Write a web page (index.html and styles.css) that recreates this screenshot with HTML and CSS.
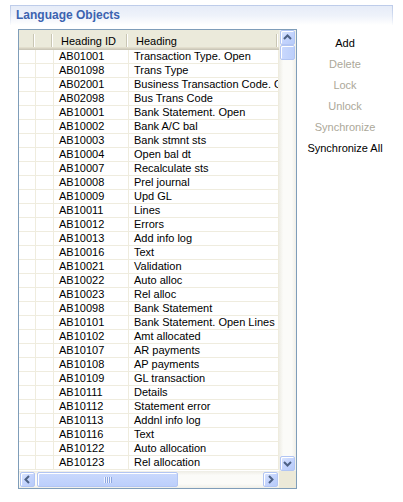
FILE: index.html
```html
<!DOCTYPE html>
<html>
<head>
<meta charset="utf-8">
<link rel="stylesheet" href="styles.css">
</head>
<body>
<div class="page">
  <div class="section-title">Language Objects</div>
  <div class="content">
    <div class="table-box">
      <div class="table-main">
        <div class="grid">
          <div class="row head">
            <div class="cell hc"></div>
            <div class="cell hc"></div>
            <div class="cell hc htext">Heading ID</div>
            <div class="cell hc htext">Heading</div>
          </div>
          <div class="row"><div class="cell"></div><div class="cell"></div><div class="cell t">AB01001</div><div class="cell t">Transaction Type. Open</div></div>
          <div class="row"><div class="cell"></div><div class="cell"></div><div class="cell t">AB01098</div><div class="cell t">Trans Type</div></div>
          <div class="row"><div class="cell"></div><div class="cell"></div><div class="cell t">AB02001</div><div class="cell t">Business Transaction Code. Open</div></div>
          <div class="row"><div class="cell"></div><div class="cell"></div><div class="cell t">AB02098</div><div class="cell t">Bus Trans Code</div></div>
          <div class="row"><div class="cell"></div><div class="cell"></div><div class="cell t">AB10001</div><div class="cell t">Bank Statement. Open</div></div>
          <div class="row"><div class="cell"></div><div class="cell"></div><div class="cell t">AB10002</div><div class="cell t">Bank A/C bal</div></div>
          <div class="row"><div class="cell"></div><div class="cell"></div><div class="cell t">AB10003</div><div class="cell t">Bank stmnt sts</div></div>
          <div class="row"><div class="cell"></div><div class="cell"></div><div class="cell t">AB10004</div><div class="cell t">Open bal dt</div></div>
          <div class="row"><div class="cell"></div><div class="cell"></div><div class="cell t">AB10007</div><div class="cell t">Recalculate sts</div></div>
          <div class="row"><div class="cell"></div><div class="cell"></div><div class="cell t">AB10008</div><div class="cell t">Prel journal</div></div>
          <div class="row"><div class="cell"></div><div class="cell"></div><div class="cell t">AB10009</div><div class="cell t">Upd GL</div></div>
          <div class="row"><div class="cell"></div><div class="cell"></div><div class="cell t">AB10011</div><div class="cell t">Lines</div></div>
          <div class="row"><div class="cell"></div><div class="cell"></div><div class="cell t">AB10012</div><div class="cell t">Errors</div></div>
          <div class="row"><div class="cell"></div><div class="cell"></div><div class="cell t">AB10013</div><div class="cell t">Add info log</div></div>
          <div class="row"><div class="cell"></div><div class="cell"></div><div class="cell t">AB10016</div><div class="cell t">Text</div></div>
          <div class="row"><div class="cell"></div><div class="cell"></div><div class="cell t">AB10021</div><div class="cell t">Validation</div></div>
          <div class="row"><div class="cell"></div><div class="cell"></div><div class="cell t">AB10022</div><div class="cell t">Auto alloc</div></div>
          <div class="row"><div class="cell"></div><div class="cell"></div><div class="cell t">AB10023</div><div class="cell t">Rel alloc</div></div>
          <div class="row"><div class="cell"></div><div class="cell"></div><div class="cell t">AB10098</div><div class="cell t">Bank Statement</div></div>
          <div class="row"><div class="cell"></div><div class="cell"></div><div class="cell t">AB10101</div><div class="cell t">Bank Statement. Open Lines</div></div>
          <div class="row"><div class="cell"></div><div class="cell"></div><div class="cell t">AB10102</div><div class="cell t">Amt allocated</div></div>
          <div class="row"><div class="cell"></div><div class="cell"></div><div class="cell t">AB10107</div><div class="cell t">AR payments</div></div>
          <div class="row"><div class="cell"></div><div class="cell"></div><div class="cell t">AB10108</div><div class="cell t">AP payments</div></div>
          <div class="row"><div class="cell"></div><div class="cell"></div><div class="cell t">AB10109</div><div class="cell t">GL transaction</div></div>
          <div class="row"><div class="cell"></div><div class="cell"></div><div class="cell t">AB10111</div><div class="cell t">Details</div></div>
          <div class="row"><div class="cell"></div><div class="cell"></div><div class="cell t">AB10112</div><div class="cell t">Statement error</div></div>
          <div class="row"><div class="cell"></div><div class="cell"></div><div class="cell t">AB10113</div><div class="cell t">Addnl info log</div></div>
          <div class="row"><div class="cell"></div><div class="cell"></div><div class="cell t">AB10116</div><div class="cell t">Text</div></div>
          <div class="row"><div class="cell"></div><div class="cell"></div><div class="cell t">AB10122</div><div class="cell t">Auto allocation</div></div>
          <div class="row"><div class="cell"></div><div class="cell"></div><div class="cell t">AB10123</div><div class="cell t">Rel allocation</div></div>
        </div>
        <div class="vscroll">
          <div class="sbtn"><svg width="15" height="15" viewBox="0 0 15 15"><polyline points="4,9 7.5,5.5 11,9" fill="none" stroke="#4d6185" stroke-width="2"/></svg></div>
          <div class="vthumb"></div>
          <div class="vtrack"></div>
          <div class="sbtn"><svg width="15" height="15" viewBox="0 0 15 15"><polyline points="4,6 7.5,9.5 11,6" fill="none" stroke="#4d6185" stroke-width="2"/></svg></div>
        </div>
      </div>
      <div class="hscroll">
        <div class="hbtn-wrap"><div class="sbtn"><svg width="15" height="15" viewBox="0 0 15 15"><polyline points="9,4 5.5,7.5 9,11" fill="none" stroke="#4d6185" stroke-width="2"/></svg></div></div>
        <div class="htrack"><div class="hthumb"><span class="grip"></span></div></div>
        <div class="hbtn-wrap"><div class="sbtn"><svg width="15" height="15" viewBox="0 0 15 15"><polyline points="6,4 9.5,7.5 6,11" fill="none" stroke="#4d6185" stroke-width="2"/></svg></div></div>
        <div class="corner"></div>
      </div>
    </div>
    <div class="actions">
      <div class="act">Add</div>
      <div class="act off">Delete</div>
      <div class="act off">Lock</div>
      <div class="act off">Unlock</div>
      <div class="act off">Synchronize</div>
      <div class="act">Synchronize All</div>
    </div>
  </div>
</div>
</body>
</html>
```

FILE: styles.css
```css
html, body {
  margin: 0;
  padding: 0;
  background: #ffffff;
}

body {
  font-family: "Liberation Sans", Arial, sans-serif;
  font-size: 11px;
  color: #000000;
}

.page {
  padding: 5px 0 0 10px;
  width: 383px;
}

.section-title {
  box-sizing: border-box;
  height: 20px;
  padding-left: 5px;
  line-height: 19px;
  font-weight: bold;
  font-size: 12px;
  color: #3c63b0;
  border: 1px solid transparent;
  border-bottom: 0;
  border-image: linear-gradient(to bottom, #bccbe9, rgba(255,255,255,0)) 1;
  background: linear-gradient(to bottom, #e6ecf8 0%, #eef2fa 50%, #ffffff 100%);
}

.content {
  display: flex;
  margin-top: 4px;
  padding-left: 8px;
}

.table-box {
  box-sizing: border-box;
  width: 279px;
  height: 460px;
  border: 1px solid #7f9db9;
  display: flex;
  flex-direction: column;
}

.table-main {
  display: flex;
  height: 441px;
}

.grid {
  width: 260px;
  overflow: hidden;
}

.row {
  display: grid;
  grid-template-columns: 17px 18px 75px 150px;
  height: 14px;
}

.cell {
  box-sizing: border-box;
  border-right: 1px solid #efecde;
  border-bottom: 1px solid #efecde;
  white-space: nowrap;
  overflow: hidden;
  line-height: 13px;
}

.cell.t {
  padding-left: 5px;
}

.row.head {
  height: 20px;
  background: #ebeadb;
  box-shadow: inset 0 -1px 0 #cbc7b8, inset 0 -2px 0 #d6d2c2, inset 0 -3px 0 #e2decd;
}

.cell.hc {
  border: 0;
  line-height: 20px;
  padding-top: 2px;
  background-image: linear-gradient(#c9c6b4, #c9c6b4), linear-gradient(#ffffff, #ffffff);
  background-repeat: no-repeat;
  background-size: 1px 13px, 1px 13px;
  background-position: right 2px top 4px, right 1px top 4px;
}

.cell.htext {
  padding-left: 7px;
  line-height: 18px;
}

.vscroll {
  width: 17px;
  display: flex;
  flex-direction: column;
  padding: 0 1px;
  box-sizing: border-box;
  background: linear-gradient(to right, #eeede5, #fbfbf8 25%, #fbfbf8 75%, #f0efe8);
}

.sbtn {
  box-sizing: border-box;
  width: 15px;
  height: 15px;
  border: 1px solid #b2c5f3;
  border-radius: 2px;
  background: linear-gradient(135deg, #dce6fe 0%, #c4d4fd 50%, #b7cbf9 100%);
  box-shadow: inset 1px 1px 0 #ffffff;
  display: flex;
}

.sbtn svg {
  margin: -1px;
}

.vthumb {
  box-sizing: border-box;
  height: 15px;
  border: 1px solid #b2c5f3;
  border-radius: 2px;
  background: linear-gradient(to right, #cad9fd, #bccffb);
  box-shadow: inset 1px 1px 0 #ffffff;
}

.vtrack {
  flex: 1;
}

.hscroll {
  display: flex;
  height: 17px;
}

.hbtn-wrap {
  width: 17px;
  padding: 1px 1px;
  box-sizing: border-box;
  background: linear-gradient(to bottom, #eeede5, #fbfbf8 25%, #fbfbf8 75%, #f0efe8);
}

.htrack {
  width: 226px;
  padding: 1px 0;
  box-sizing: border-box;
  background: linear-gradient(to bottom, #eeede5, #fbfbf8 25%, #fbfbf8 75%, #f0efe8);
}

.hthumb {
  box-sizing: border-box;
  margin-left: 1px;
  width: 141px;
  height: 15px;
  border: 1px solid #b2c5f3;
  border-radius: 2px;
  background: linear-gradient(to bottom, #cad9fd, #bccffb);
  box-shadow: inset 1px 1px 0 #ffffff;
  display: flex;
  align-items: center;
  justify-content: center;
}

.grip {
  width: 8px;
  height: 6px;
  background: repeating-linear-gradient(to right, #eef3ff 0, #eef3ff 1px, #8ca6e0 1px, #8ca6e0 2px);
}

.corner {
  width: 17px;
  background: #ece9d8;
}

.actions {
  width: 96px;
  padding-top: 4px;
  display: flex;
  flex-direction: column;
  align-items: center;
}

.act {
  line-height: 21px;
  height: 21px;
}

.act.off {
  color: #aca899;
}
```
